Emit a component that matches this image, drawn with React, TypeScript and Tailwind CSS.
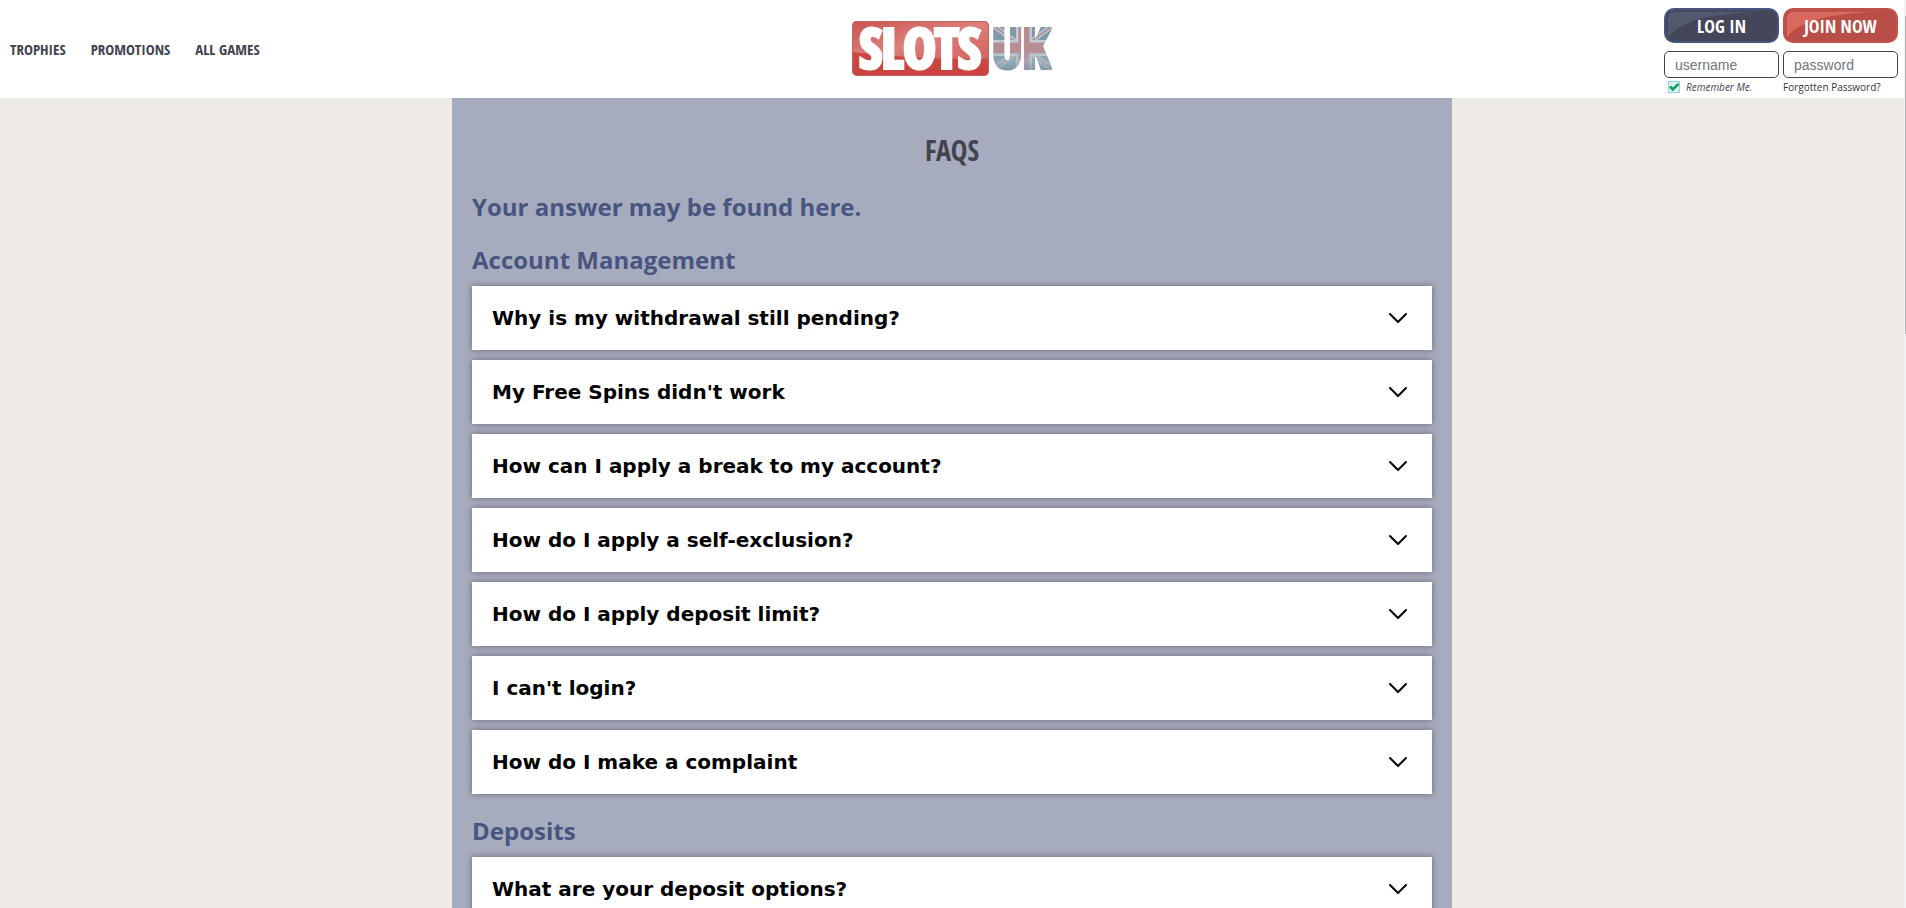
import { useState } from 'react';
import { ChevronDown } from 'lucide-react';

interface Section {
  title: string;
  questions: string[];
}

const NAV = ['TROPHIES', 'PROMOTIONS', 'ALL GAMES'];

const SECTIONS: Section[] = [
  {
    title: 'Account Management',
    questions: [
      'Why is my withdrawal still pending?',
      "My Free Spins didn't work",
      'How can I apply a break to my account?',
      'How do I apply a self-exclusion?',
      'How do I apply deposit limit?',
      "I can't login?",
      'How do I make a complaint',
    ],
  },
  {
    title: 'Deposits',
    questions: ['What are your deposit options?'],
  },
];

function Logo() {
  return (
    <svg width="200" height="80" viewBox="0 -10 200 80" role="img" aria-label="Slots UK">
      <defs>
        <linearGradient id="gloss" x1="0" y1="0" x2="1" y2="1">
          <stop offset="0" stopColor="#c9534f" />
          <stop offset="0.5" stopColor="#dc7f7b" />
          <stop offset="1" stopColor="#d4625e" />
        </linearGradient>
        <linearGradient id="plate" x1="0" y1="0" x2="0" y2="1">
          <stop offset="0" stopColor="#c74f4a" />
          <stop offset="1" stopColor="#cb433e" />
        </linearGradient>
        <linearGradient id="shade" x1="0" y1="0" x2="0" y2="1">
          <stop offset="0" stopColor="#7d96a8" stopOpacity="0.15" />
          <stop offset="0.5" stopColor="#8ea6b2" stopOpacity="0.15" />
          <stop offset="0.7" stopColor="#9fb6c0" stopOpacity="0.6" />
          <stop offset="1" stopColor="#5d7b88" stopOpacity="0.9" />
        </linearGradient>
        <clipPath id="box">
          <rect x="0" y="2" width="137" height="55" rx="5" />
        </clipPath>
        <pattern id="flag" patternUnits="userSpaceOnUse" x="138" y="0" width="66" height="60">
          <rect width="66" height="60" fill="#8198aa" />
          <path d="M0 4 L66 53 M66 4 L0 53" stroke="#c3d0d8" strokeWidth="5" />
          <path d="M0 4 L66 53 M66 4 L0 53" stroke="#b98f96" strokeWidth="2" />
          <path d="M34 0 V60 M0 29 H66" stroke="#cbd5da" strokeWidth="16" />
          <path d="M34 0 V60 M0 29 H66" stroke="#bf8a8e" strokeWidth="11" />
          <rect width="66" height="60" fill="url(#shade)" />
        </pattern>
      </defs>
      <g clipPath="url(#box)">
        <rect y="2" width="137" height="55" fill="url(#plate)" />
        <path d="M0 33 Q70 41 137 40 V2 H0 Z" fill="url(#gloss)" />
      </g>
      <rect x="0.5" y="2.5" width="136" height="54" rx="5" fill="none" stroke="#c4625e" />
      <g fontSize="54" fontWeight="700" strokeWidth="4" textAnchor="middle" className="font-['Open_Sans_Condensed',sans-serif]">
        <text x="68" y="49" fill="#fff" stroke="#fff">SLOTS</text>
        <text x="169" y="49" fill="url(#flag)" stroke="url(#flag)">UK</text>
      </g>
    </svg>
  );
}

function Gloss({ fill }: { fill: string }) {
  return (
    <svg className="absolute inset-0 size-full" viewBox="0 0 115 35" preserveAspectRatio="none" aria-hidden="true">
      <path d="M2 31 Q20 3 105 2 H10 Q2 2 2 10 Z" fill={fill} />
    </svg>
  );
}

function LoginForm() {
  const [remember, setRemember] = useState(true);
  const field = "block h-[27px] w-full min-w-0 rounded-[5px] border border-[#43434f] bg-white px-2.5 font-['Liberation_Sans',sans-serif] text-sm text-gray-700 placeholder:text-[#757575]";
  const button = "relative h-[35px] overflow-hidden rounded-[10px] border-2 font-['Open_Sans_Condensed',sans-serif] text-lg leading-none font-bold text-white";

  return (
    <form className="mt-2 grid w-[234px] grid-cols-2 gap-x-1" onSubmit={(e) => e.preventDefault()}>
      <button type="submit" className={`${button} border-[#475580] bg-[#44465a]`}>
        <Gloss fill="#535a70" />
        <span className="relative">LOG IN</span>
      </button>
      <button type="button" className={`${button} border-[#c0524a] bg-[#b94e47]`}>
        <Gloss fill="#d9685f" />
        <span className="relative">JOIN NOW</span>
      </button>
      <div className="mt-2">
        <input type="text" aria-label="username" placeholder="username" className={field} />
      </div>
      <div className="mt-2">
        <input type="password" aria-label="password" placeholder="password" className={field} />
      </div>
      <label className="mt-px flex h-4 items-center gap-1.5 pl-1 text-[10px] text-[#43434f] italic">
        <span className="relative size-3">
          <input
            type="checkbox"
            checked={remember}
            onChange={(e) => setRemember(e.target.checked)}
            className="block size-3 appearance-none border border-[#8fd0ea] bg-[#d9f1f8]"
          />
          {remember && (
            <svg className="pointer-events-none absolute inset-0" width="12" height="12" viewBox="0 0 12 12" fill="none" stroke="#159c56" strokeWidth="2.6">
              <path d="M2 5.5 L4.8 8.5 L10.5 2.8" />
            </svg>
          )}
        </span>
        Remember Me.
      </label>
      <a href="#forgotten" className="mt-px h-4 text-[10px] leading-4 text-[#33333f]">Forgotten Password?</a>
    </form>
  );
}

function Question({ text }: { text: string }) {
  return (
    <button
      type="button"
      aria-expanded="false"
      className="flex h-16 w-full items-center justify-between bg-white pr-[18px] pl-5 text-left font-['DejaVu_Sans',sans-serif] text-xl font-bold text-black shadow-[0_0_6px_rgba(60,60,60,0.6)]"
    >
      {text}
      <ChevronDown className="size-8 text-black" strokeWidth={1.5} aria-hidden="true" />
    </button>
  );
}

export default function App() {
  return (
    <div className="min-h-screen bg-[#eeebe6] pr-0.5 font-['Open_Sans',sans-serif]">
      <header className="grid h-[98px] grid-cols-[1fr_auto_1fr] items-center bg-white">
        <nav className="flex gap-[25px] pl-2.5 font-['Open_Sans_Condensed',sans-serif] text-[15px] font-bold text-[#43434f]">
          {NAV.map((item) => (
            <a key={item} href="#">{item}</a>
          ))}
        </nav>
        <a href="#"><Logo /></a>
        <div className="flex justify-end self-start pr-1.5">
          <LoginForm />
        </div>
      </header>

      <main className="mx-auto max-w-[1000px] bg-[#a6abbe] px-5 pt-8 pb-5">
        <h1 className="text-center font-['Open_Sans_Condensed',sans-serif] text-[28px] leading-10 font-bold text-[#43434f]">FAQS</h1>
        <h2 className="mt-5 text-2xl leading-[33px] font-bold text-[#475580]">Your answer may be found here.</h2>
        {SECTIONS.map((section) => (
          <section key={section.title} className="mt-5">
            <h2 className="mb-2.5 text-2xl leading-[33px] font-bold text-[#475580]">{section.title}</h2>
            <div className="flex flex-col gap-2.5">
              {section.questions.map((q) => (
                <Question key={q} text={q} />
              ))}
            </div>
          </section>
        ))}
      </main>

      {/* Slim scroll indicator on the window edge */}
      <div className="fixed inset-y-0 right-0 w-0.5 bg-[#f1f1f1]">
        <div className="mt-4 ml-px h-[35%] bg-[#b5b5b5]" />
      </div>
    </div>
  );
}
